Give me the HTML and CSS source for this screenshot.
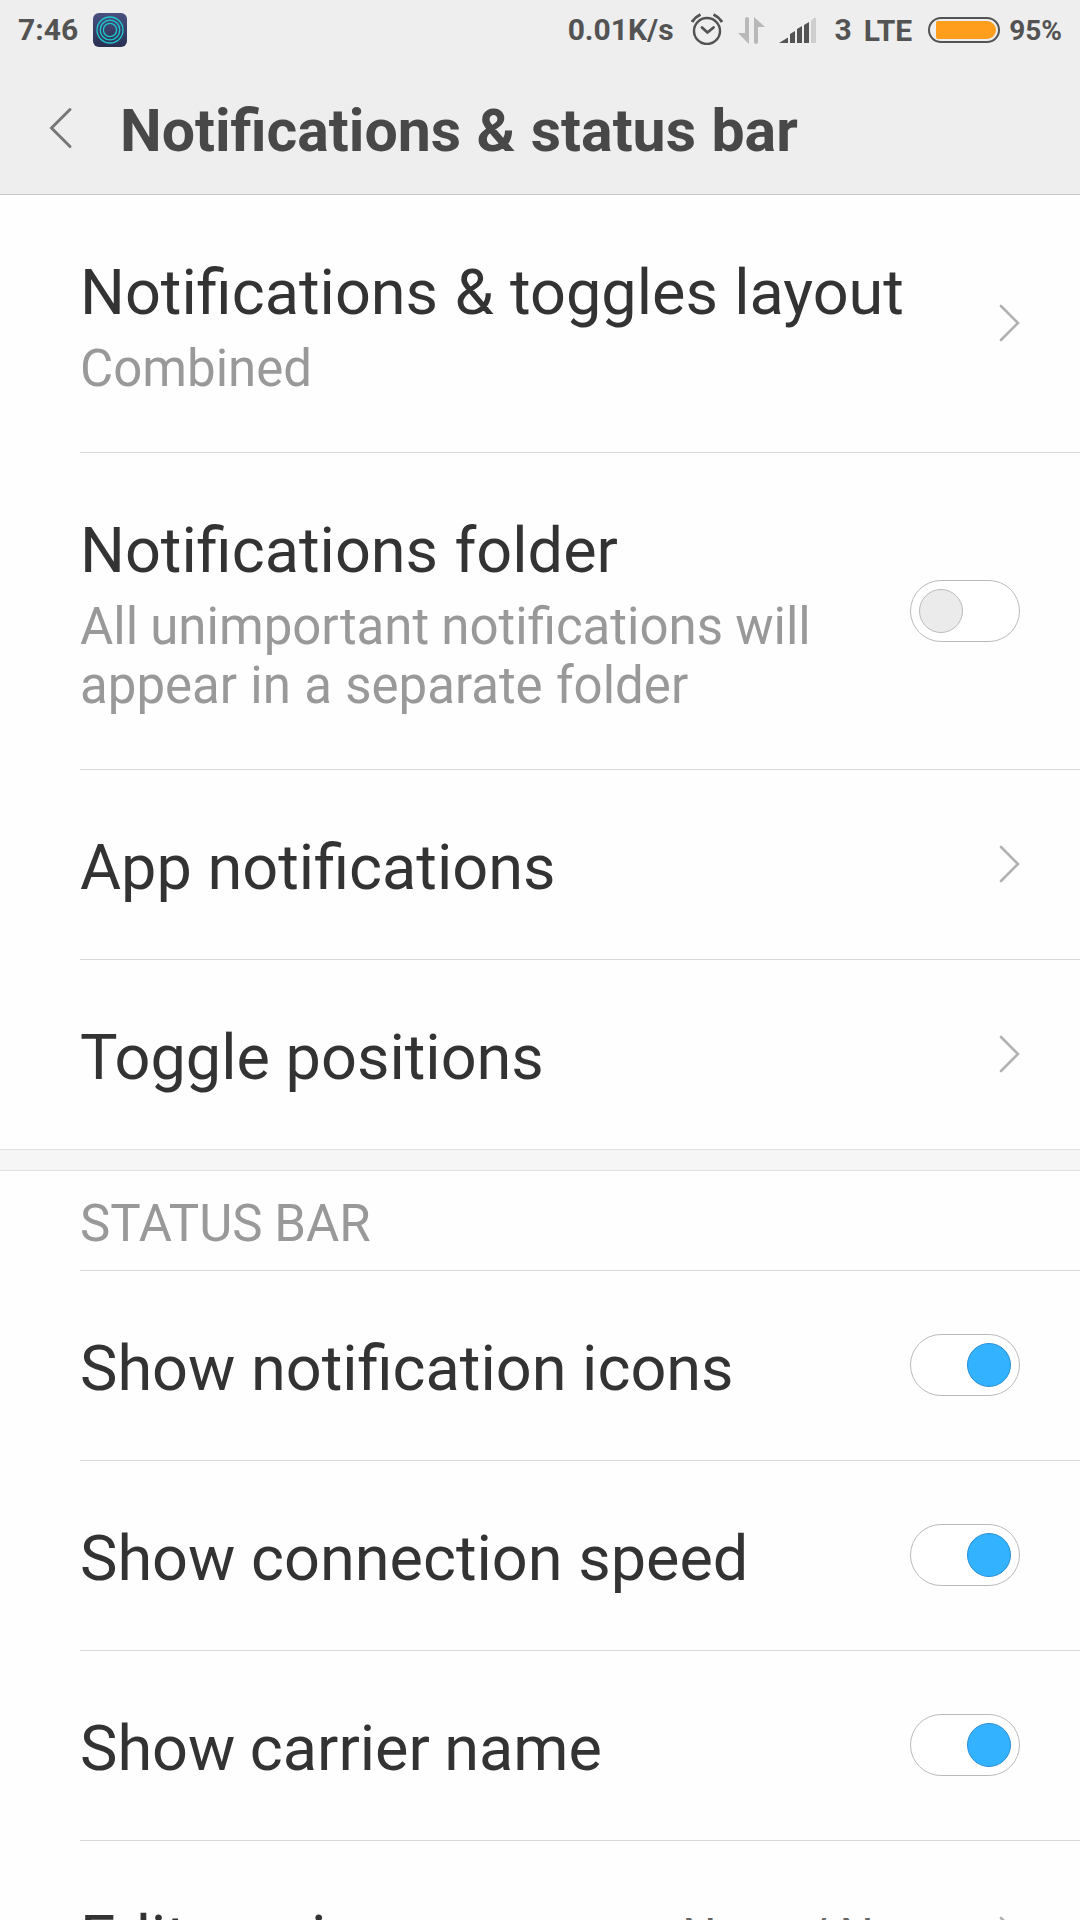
FILE: index.html
```html
<!DOCTYPE html>
<html lang="en">
<head>
<meta charset="utf-8">
<title>Notifications &amp; status bar</title>
<link rel="stylesheet" href="styles.css">
</head>
<body>
<header class="top">
  <div class="statusbar">
    <span class="clock">7:46</span>
    <svg class="app-icon" width="34" height="34" viewBox="0 0 34 34">
      <defs><linearGradient id="g" x1="0" y1="0" x2="0" y2="1"><stop offset="0" stop-color="#485080"/><stop offset="1" stop-color="#293052"/></linearGradient></defs>
      <rect width="34" height="34" rx="6" fill="url(#g)"/>
      <g fill="none" stroke="#1fc9cf" stroke-width="1.3"><circle cx="17" cy="17" r="13"/><circle cx="17" cy="17" r="9.8"/><circle cx="17" cy="17" r="6.6"/></g>
    </svg>
    <span class="speed">0.01K/s</span>
    <svg class="alarm" width="32" height="32" viewBox="0 0 32 32" fill="none" stroke="#535353">
      <circle cx="16" cy="18" r="13" stroke-width="2.4"/>
      <path d="M11 14.5l5.500 5 6-5" stroke-width="2.8" stroke-linecap="round" stroke-linejoin="round"/>
      <path d="M1 9Q4 4 9.500 1.500M31 9Q28 4 22.500 1.500" stroke-width="3"/>
    </svg>
    <svg class="data" width="28" height="27" viewBox="0 0 28 27" fill="#b8b8b8">
      <path d="M11 27V2a2 2 0 0 0-4 0V16H0zM16 0V25a2 2 0 0 0 4 0V10H27z"/>
    </svg>
    <svg class="signal" width="37" height="25" viewBox="0 0 37 25">
      <path fill="#535353" d="M0 25L9 19.500V25zM11 25V16l5-3V25zM18 25V11l5-3V25zM25 25V7l5-3V25z"/>
      <path fill="#cecece" d="M32 25V3l3-3h2V25z"/>
    </svg>
    <span class="carrier">3</span>
    <span class="network">LTE</span>
    <span class="battery"><span class="charge"></span></span>
    <span class="percent">95%</span>
  </div>
  <div class="titlebar">
    <svg class="back" width="24" height="42" viewBox="0 0 24 42"><path d="M21 2.500L2.500 21 21 39.500" fill="none" stroke="#777" stroke-width="3" stroke-linecap="round"/></svg>
    <h1>Notifications &amp; status bar</h1>
  </div>
</header>
<main>
  <section class="group">
    <div class="row layout">
      <div class="label"><div class="name">Notifications &amp; toggles layout</div><div class="note">Combined</div></div>
      <svg class="go" width="22" height="40" viewBox="0 0 22 40"><path d="M3 3L20 20 3 37"/></svg>
    </div>
    <div class="row folder">
      <div class="label"><div class="name">Notifications folder</div><div class="note"><span class="snug">All unimportant notifications will</span><br><span class="loose">appear in a separate folder</span></div></div>
      <span class="toggle"></span>
    </div>
    <div class="row">
      <div class="label"><div class="name">App notifications</div></div>
      <svg class="go" width="22" height="40" viewBox="0 0 22 40"><path d="M3 3L20 20 3 37"/></svg>
    </div>
    <div class="row">
      <div class="label"><div class="name">Toggle positions</div></div>
      <svg class="go" width="22" height="40" viewBox="0 0 22 40"><path d="M3 3L20 20 3 37"/></svg>
    </div>
  </section>
  <div class="gap"></div>
  <section class="group">
    <h2>STATUS BAR</h2>
    <div class="row">
      <div class="label"><div class="name">Show notification icons</div></div>
      <span class="toggle on"></span>
    </div>
    <div class="row">
      <div class="label"><div class="name">Show connection speed</div></div>
      <span class="toggle on"></span>
    </div>
    <div class="row">
      <div class="label"><div class="name tight">Show carrier name</div></div>
      <span class="toggle on"></span>
    </div>
    <div class="row">
      <div class="label"><div class="name tight">Edit carrier name</div></div>
      <span class="value">None / None</span>
      <svg class="go" width="22" height="40" viewBox="0 0 22 40"><path d="M3 3L20 20 3 37"/></svg>
    </div>
  </section>
</main>
</body>
</html>
```
FILE: styles.css
```css
*, *::before { box-sizing: border-box; }
body {
  margin: 0;
  width: 1080px;
  height: 1920px;
  overflow: hidden;
  background: #fefefe;
  font-family: Roboto, "Liberation Sans", sans-serif;
  color: #333;
}
main { height: 1725px; overflow: hidden; }
.top {
  height: 195px;
  background: #eee;
  border-bottom: 1px solid #c8c8c8;
}
.statusbar {
  display: flex;
  align-items: center;
  height: 60px;
  padding: 0 18px;
  font-size: 30px;
  font-weight: 700;
  color: #535353;
  white-space: nowrap;
}
.statusbar svg { flex: none; }
.clock, .speed, .carrier { padding-bottom: 2px; }
.app-icon { margin-left: 15px; }
.speed { margin-left: auto; }
.alarm { margin: 0 0 2px 17px; }
.data { margin-left: 15px; }
.signal { margin: 1px 19px 0 13px; }
.network { margin-left: 12px; }
.battery {
  width: 72px;
  height: 26px;
  margin: 0 9px 0 16px;
  padding: 2px 2px 2px 6px;
  border: 2px solid #535353;
  border-radius: 13px;
}
.charge {
  display: block;
  height: 18px;
  border-radius: 2px 9px 9px 2px;
  background: #ff9d1c;
}
.percent { font-size: 28px; }
.titlebar {
  display: flex;
  align-items: center;
  height: 134px;
  padding: 7px 0 0 49px;
}
.back { margin-bottom: 5px; }
h1 {
  margin: 0 0 0 47px;
  font-size: 59px;
  line-height: 70px;
  font-weight: 700;
  word-spacing: 0.8px;
  color: #484848;
  white-space: nowrap;
}
.group { padding-left: 80px; }
.row {
  display: flex;
  align-items: center;
  height: 190px;
  padding-right: 60px;
  border-bottom: 1px solid #d9d9d9;
}
.row:last-child { border-bottom: 0; height: 189px; }
.layout { height: 258px; }
.folder { height: 317px; }
.label { flex: 1; white-space: nowrap; }
.name { padding-top: 6px; font-size: 63px; line-height: 74px; }
.layout .name, .folder .name { padding-top: 6px; word-spacing: 0.7px; }
.note { padding-top: 9px; font-size: 51px; line-height: 59px; color: #999; }
.name.tight { word-spacing: -1.2px; }
.loose { word-spacing: 0.6px; }
.snug { word-spacing: -0.5px; }
.go { margin-bottom: 1px; fill: none; stroke: #b2b2b2; stroke-width: 2.6; stroke-linecap: round; }
.value { margin-right: 45px; font-size: 48px; color: #666; }
.toggle {
  width: 110px;
  height: 62px;
  padding: 8px;
  border: 1px solid #bbb;
  border-radius: 31px;
  background: #fff;
}
.toggle.on { margin-bottom: 1px; }
.toggle::before {
  content: "";
  display: block;
  width: 44px;
  height: 44px;
  border: 1px solid #bbb;
  border-radius: 50%;
  background: #ebebeb;
}
.toggle.on::before {
  margin-left: auto;
  border-color: #2b8fd8;
  background: #33b2ff;
}
.gap {
  height: 22px;
  border: solid #e0e0e0;
  border-width: 1px 0;
  background: #f6f6f6;
}
h2 {
  margin: 0;
  height: 100px;
  padding-top: 23px;
  border-bottom: 1px solid #d9d9d9;
  font-size: 51px;
  line-height: 60px;
  font-weight: 400;
  word-spacing: -1px;
  color: #999;
}
```
